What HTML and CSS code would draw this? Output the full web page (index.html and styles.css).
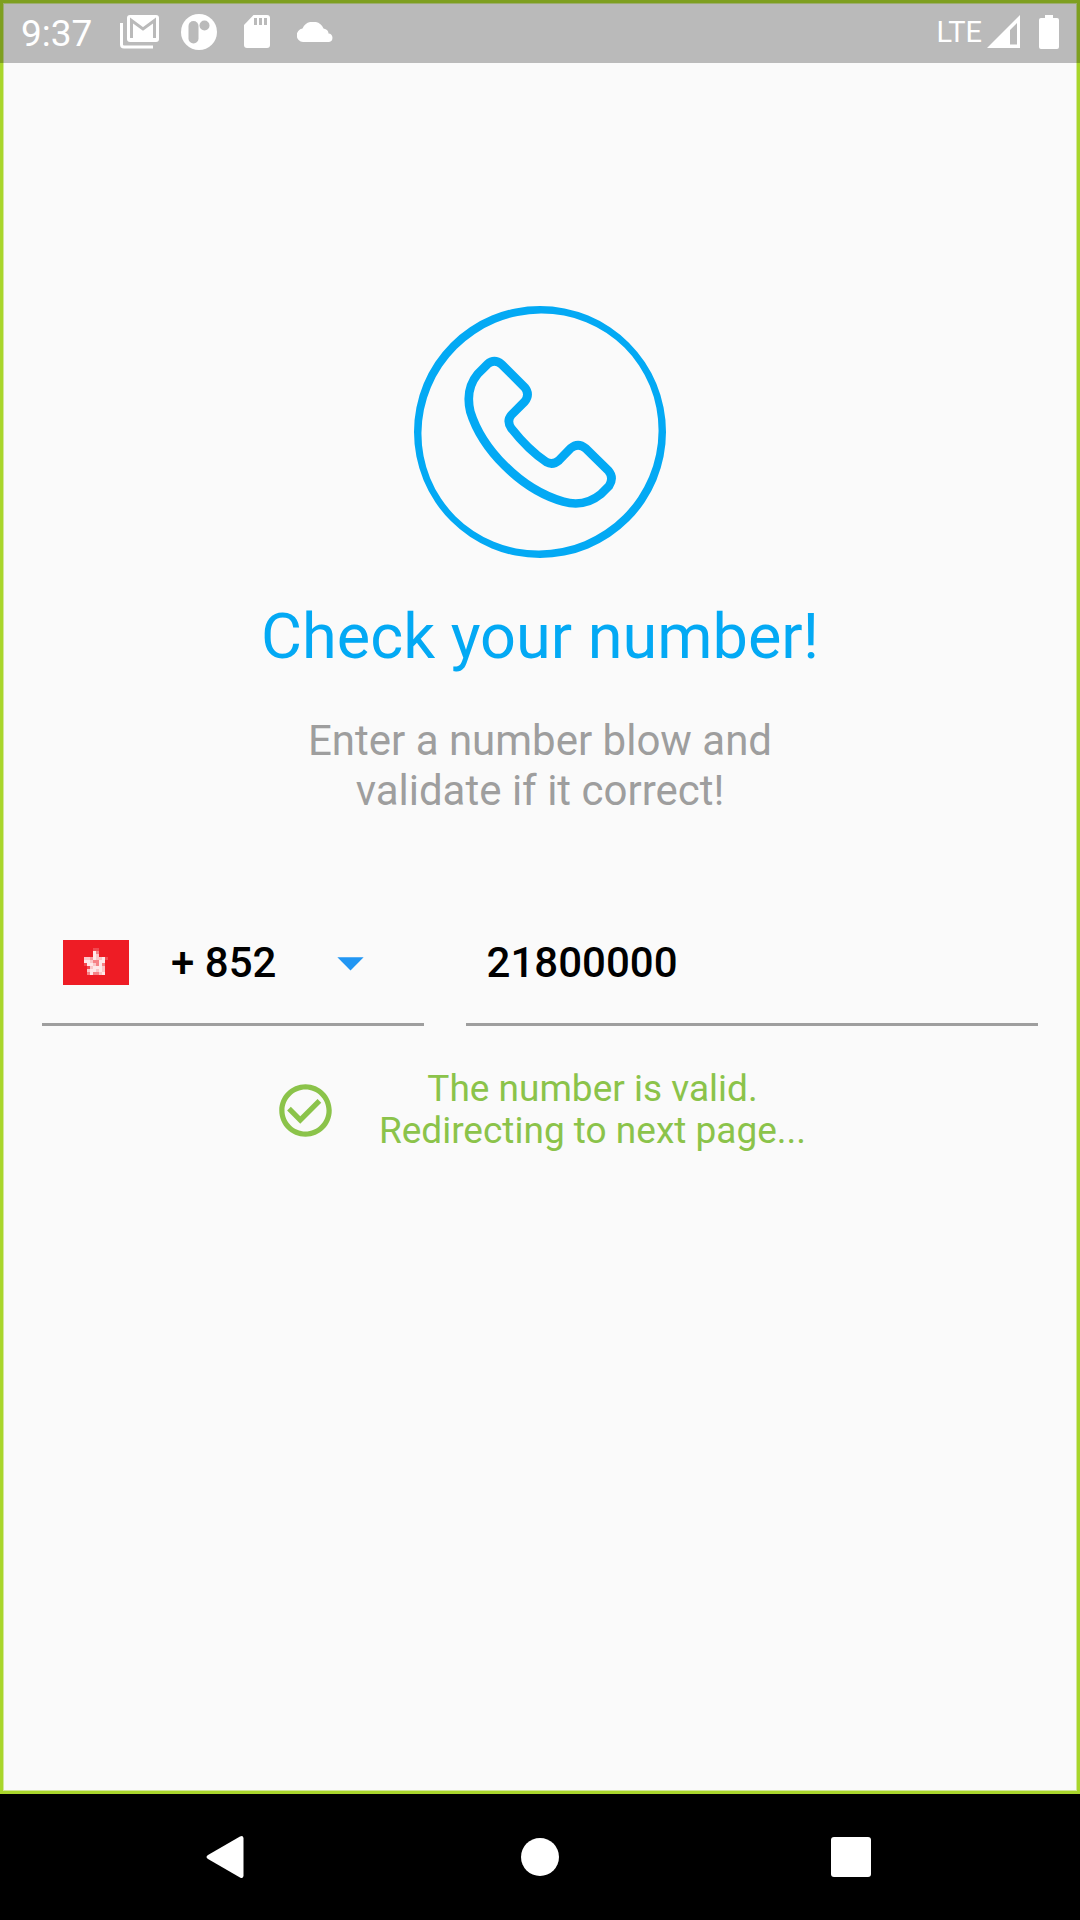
FILE: index.html
```html
<!DOCTYPE html>
<html lang="en">
<head>
  <meta charset="utf-8">
  <meta name="viewport" content="width=device-width, initial-scale=1">
  <title>Check your number!</title>
  <link rel="stylesheet" href="styles.css">
</head>
<body>
  <div class="screen">
    <header class="status-bar">
      <span class="clock">9:37</span>
      <div class="notifications">
        <svg class="icon-mail" viewBox="0 0 40 34" aria-hidden="true">
          <path d="M1.500 8V29.500Q1.500 32 4 32H33" fill="none" stroke="#fff" stroke-width="3"/>
          <rect x="7" y="0" width="32" height="27" rx="3" fill="#fff"/>
          <path d="M11.500 23V5.500L23 14L34.500 5.500V23" fill="none" stroke="#bababa" stroke-width="3"/>
        </svg>
        <svg class="icon-app" viewBox="0 0 36 36" aria-hidden="true">
          <circle cx="18" cy="18" r="18" fill="#fff"/>
          <rect x="7.500" y="7" width="10" height="22.500" rx="5" fill="#bababa"/>
          <circle cx="23.500" cy="11.500" r="5" fill="#bababa"/>
        </svg>
        <svg class="icon-card" viewBox="0 0 26 33" aria-hidden="true">
          <path d="M9.500 0H23Q26 0 26 3V30Q26 33 23 33H3Q0 33 0 30V10Z" fill="#fff"/>
          <path d="M11.500 3V10M16.500 3V10M21.500 3V10" stroke="#bababa" stroke-width="3"/>
        </svg>
        <svg class="icon-cloud" viewBox="0 0 36 20" aria-hidden="true">
          <path d="M6 20A6.800 6.800 0 0 1 5.500 6.500A11.500 11.500 0 0 1 26.500 6.500Q31.500 7.500 31.500 11.500A4.300 4.300 0 0 1 32 20Z" fill="#fff"/>
        </svg>
      </div>
      <div class="system">
        <span class="network">LTE</span>
        <svg class="icon-signal" viewBox="0 0 33 33" aria-hidden="true">
          <path d="M33 0V33H0ZM30 8L23 15V29.500H30Z" fill="#fff" fill-rule="evenodd"/>
        </svg>
        <svg class="icon-battery" viewBox="0 0 20 34" aria-hidden="true">
          <path d="M6 0H14V3H18Q20 3 20 5V32Q20 34 18 34H2Q0 34 0 32V5Q0 3 2 3H6Z" fill="#fff"/>
        </svg>
      </div>
    </header>

    <main class="content">
      <svg class="phone" viewBox="42 33 756 756" aria-hidden="true">
        <path fill="#03a9f4" fill-rule="evenodd" d="M42 411A378 378 0 1 1 798 411A378 378 0 1 1 42 411ZM170.300 161.300A353 358 45 1 1 669.700 660.700A353 358 45 1 1 170.300 161.300Z"/>
        <path fill="none" stroke="#03a9f4" stroke-width="26" stroke-linejoin="round" d="M262 208Q283 190 305 208L374 277Q391 298 374 320L334 360Q319 378 334 400Q385 465 439 501Q458 512 477 496L512 460Q534 441 557 460L625 527Q643 548 627 573L603 597Q553 638 490 620C360 583 245 460 211 350Q195 283 233 237Z"/>
      </svg>
      <h1 class="title">Check your number!</h1>
      <p class="subtitle">Enter a number blow and<br>validate if it correct!</p>

      <form class="fields">
        <label class="field field-code">
          <svg class="flag" viewBox="0 0 66 45" shape-rendering="crispEdges" aria-hidden="true">
            <path fill="#ee1c25" d="M0 0H66V45H0Z"/>
            <g fill="#fff" transform="translate(0 -1) scale(3)">
              <path fill-opacity=".2" d="M10 3h2v1h-2zM9 6h1v1h-1zM14 6h1v1h-1zM7 8h1v1h-1zM8 9h1v1h-1z"/>
              <path fill-opacity=".45" d="M11 4h1v1h-1zM9 6h1v1h-1zM10 7h2v1h-2zM11 8h1v1h-1zM13 8h1v1h-1zM10 11h2v1h-2zM8 11h1v1h-1z"/>
              <path fill-opacity=".75" d="M11 5h1v1h-1zM7 6h2v1h-2zM11 6h2v1h-2zM9 7h1v1h-1zM10 8h1v1h-1zM9 9h1v1h-1zM13 9h1v1h-1zM11 10h1v1h-1zM8 10h1v1h-1zM13 10h1v1h-1zM12 11h1v1h-1z"/>
              <path fill-opacity=".9" d="M10 4h1v3h-1zM13 6h1v1h-1zM7 7h2v1h-2zM12 7h2v1h-2zM8 8h2v1h-2zM12 8h1v1h-1zM10 9h3v1h-3zM9 10h2v1h-2zM12 10h1v1h-1zM9 11h1v1h-1zM13 11h1v1h-1z"/>
            </g>
          </svg>
          <select class="control" aria-label="Country code">
            <option>+ 852</option>
          </select>
          <svg class="arrow" viewBox="0 0 24 24" aria-hidden="true"><path d="M7 10l5 5 5-5z" fill="#2196f3"/></svg>
        </label>
        <label class="field field-number">
          <input class="control" type="tel" value="21800000" aria-label="Phone number">
        </label>
      </form>

      <div class="result" role="status">
        <svg class="check" viewBox="0 0 24 24" aria-hidden="true">
          <path fill="#8bc34a" d="M16.590 7.580L10 14.170l-3.590-3.580L5 12l5 5 8-8zM12 2C6.480 2 2 6.480 2 12s4.480 10 10 10 10-4.480 10-10S17.520 2 12 2zm0 18c-4.420 0-8-3.580-8-8s3.580-8 8-8 8 3.580 8 8-3.580 8-8 8z"/>
        </svg>
        <p class="result-text">The number is valid.<br>Redirecting to next page...</p>
      </div>
    </main>
  </div>

  <nav class="nav-bar">
    <button class="nav-button" type="button" aria-label="Back">
      <svg class="nav-icon" viewBox="0 0 48 48" aria-hidden="true"><path d="M38.500 5V43Q38 46 35 44.500L3 26Q0 24 3 22L35 3.500Q38 2 38.500 5Z" fill="#fff"/></svg>
    </button>
    <button class="nav-button" type="button" aria-label="Home">
      <svg class="nav-icon" viewBox="0 0 48 48" aria-hidden="true"><circle cx="24" cy="24" r="19" fill="#fff"/></svg>
    </button>
    <button class="nav-button" type="button" aria-label="Overview">
      <svg class="nav-icon" viewBox="0 0 48 48" aria-hidden="true"><rect x="4" y="4" width="40" height="40" rx="3" fill="#fff"/></svg>
    </button>
  </nav>
</body>
</html>
```
FILE: styles.css
```css
* {
  box-sizing: border-box;
}

body {
  margin: 0;
  min-height: 100vh;
  display: flex;
  flex-direction: column;
  background: #000;
  font-family: Roboto, "Liberation Sans", sans-serif;
}

svg {
  display: block;
  flex: none;
}

.screen {
  flex: 1;
  background: #fafafa;
  box-shadow: inset 0 0 0 3px #a9d62b, inset 0 0 0 4px #d3e89a;
}

.status-bar {
  height: 63px;
  padding: 0 21px;
  display: flex;
  align-items: center;
  color: #fff;
  background: rgba(0, 0, 0, 0.255);
}

.clock {
  font-size: 37px;
  line-height: 42px;
  margin-top: 4px;
}

.notifications {
  display: flex;
  align-items: center;
  gap: 27px;
  margin-left: 28px;
}

.icon-mail {
  width: 40px;
  height: 34px;
}

.icon-app {
  width: 36px;
  height: 36px;
  margin-left: -6px;
}

.icon-card {
  width: 26px;
  height: 33px;
}

.icon-cloud {
  width: 36px;
  height: 20px;
}

.system {
  display: flex;
  align-items: center;
  margin-left: auto;
}

.network {
  font-family: "Liberation Sans Narrow", Roboto, sans-serif;
  font-size: 29px;
  line-height: 42px;
}

.icon-signal {
  width: 33px;
  height: 33px;
  margin-left: 5px;
}

.icon-battery {
  width: 20px;
  height: 34px;
  margin-left: 19px;
}

.content {
  display: flex;
  flex-direction: column;
  align-items: center;
  padding: 243px 42px 42px;
}

.phone {
  width: 252px;
  height: 252px;
}

.title {
  margin: 42px 0 0;
  font-size: 63px;
  line-height: 74px;
  font-weight: 400;
  color: #03a9f4;
}

.subtitle {
  margin: 42px 0 0;
  font-size: 42px;
  line-height: 50px;
  text-align: center;
  color: #9e9e9e;
}

.fields {
  align-self: stretch;
  display: grid;
  grid-template-columns: minmax(0, 2fr) minmax(0, 3fr);
  gap: 42px;
  margin-top: 84px;
}

.field {
  display: flex;
  align-items: center;
  height: 126px;
  padding: 2px 42px 0 21px;
  border-bottom: 3px solid #9e9e9e;
}

.field-code {
  gap: 42px;
}

.flag {
  width: 66px;
  height: 45px;
}

.control {
  flex: 1;
  min-width: 0;
  height: 50px;
  padding: 0;
  border: 0;
  outline: 0;
  appearance: none;
  background: none;
  font: 500 42px/50px Roboto, "Liberation Sans", sans-serif;
  color: #000;
}

.arrow,
.check {
  width: 63px;
  height: 63px;
}

.result {
  display: flex;
  align-items: center;
  gap: 42px;
  margin-top: 42px;
}

.result-text {
  margin: 0;
  font-size: 37px;
  line-height: 42px;
  text-align: center;
  color: #8bc34a;
}

.nav-bar {
  display: grid;
  grid-template-columns: repeat(3, 1fr);
  height: 126px;
  padding: 0 74px;
  background: #000;
}

.nav-button {
  display: flex;
  align-items: center;
  justify-content: center;
  padding: 0;
  border: 0;
  background: none;
}

.nav-icon {
  width: 48px;
  height: 48px;
}
```
